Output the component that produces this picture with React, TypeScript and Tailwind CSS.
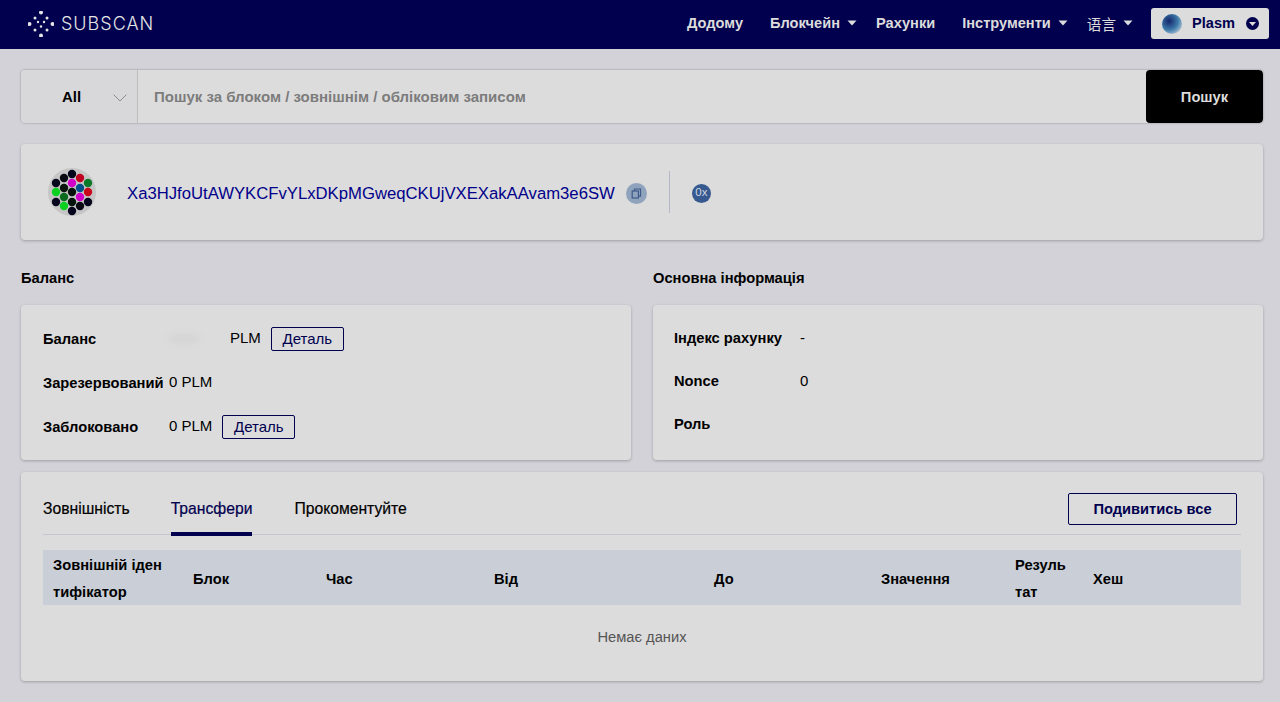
import { ChevronDown } from "lucide-react";

const navy = "text-[#00004f]";

function Caret() {
  return (
    <svg width="10" height="6" viewBox="0 0 10 6" className="ml-[7px]">
      <path d="M0.5 0.5h9L5 5.5z" fill="currentColor" />
    </svg>
  );
}

function NavItem({ label, caret, className }: { label: string; caret?: boolean; className?: string }) {
  return (
    <div className={`flex items-center text-[14.6px] font-bold text-[#dcdcdc] ${className ?? ""}`}>
      {label}
      {caret && <Caret />}
    </div>
  );
}

function Logo() {
  const dots = [
    [13, 1.5, 2], [7, 7, 1.5], [19, 7, 1.5], [1.5, 13, 2], [10, 11, 1.2], [16, 11, 1.2],
    [24.5, 13, 2], [7, 19, 1.5], [19, 19, 1.5], [13, 15.5, 1.2], [13, 24.5, 2],
  ];
  return (
    <div className="flex items-center">
      <svg width="26" height="26" viewBox="0 0 26 26">
        {dots.map(([x, y, r]) => (
          <circle key={`${x}-${y}`} cx={x} cy={y} r={r} fill="#e4e4e4" />
        ))}
      </svg>
      <span className="ml-[7px] font-['Inter',sans-serif] text-[18px] font-light tracking-[1px] text-[#e4e4e4]">
        SUBSCAN
      </span>
    </div>
  );
}

function Identicon() {
  const dots: [number, number, string][] = [
    [72, 174, "#04041c"],
    [64, 178, "#0a0a14"],
    [80, 178, "#c00020"],
    [56, 183, "#06061c"],
    [72, 183, "#d000c8"],
    [88, 183, "#0a7a2a"],
    [64, 188, "#08140c"],
    [80, 188, "#00508c"],
    [56, 192, "#0ad020"],
    [72, 192, "#08100c"],
    [88, 192, "#c80818"],
    [64, 197, "#0a6a1e"],
    [80, 197, "#d000c8"],
    [56, 202, "#06061c"],
    [72, 202, "#06140c"],
    [88, 202, "#04041c"],
    [64, 206, "#0ad020"],
    [80, 206, "#0a0a14"],
    [72, 211, "#04041c"],
  ];
  return (
    <svg width="48" height="48" viewBox="48 168 48 48" className="shrink-0">
      <circle cx="72" cy="192" r="24" fill="#c6c6c6" />
      {dots.map(([x, y, c]) => (
        <circle key={`${x}-${y}`} cx={x} cy={y} r="4.2" fill={c} />
      ))}
    </svg>
  );
}

function DetailButton() {
  return (
    <button className="flex h-[24px] w-[73px] items-center justify-center rounded-[2px] border border-[#00004f] text-[15px] text-[#00004f]">
      Деталь
    </button>
  );
}

function Row({
  label,
  children,
  labelWidth,
  height,
}: {
  label: string;
  children?: React.ReactNode;
  labelWidth: string;
  height: string;
}) {
  return (
    <div className={`flex ${height} items-center text-[15px] text-black`}>
      <div className={`${labelWidth} shrink-0 whitespace-nowrap text-[14.7px] font-bold`}>{label}</div>
      {children}
    </div>
  );
}

const columns = [
  "Зовнішній ідентифікатор",
  "Блок",
  "Час",
  "Від",
  "До",
  "Значення",
  "Результат",
  "Хеш",
];

export default function App() {
  return (
    <div className="min-h-[702px] bg-[#d2d2d8] font-['Liberation_Sans',sans-serif]">
      <header className="flex h-[49px] items-center bg-[#00004f] pb-[2px] pl-[28px] pr-[11px]">
        <Logo />
        <nav className="ml-auto flex items-center">
          <NavItem label="Додому" />
          <NavItem label="Блокчейн" caret className="ml-[27px]" />
          <NavItem label="Рахунки" className="ml-[19px]" />
          <NavItem label="Інструменти" caret className="ml-[27px]" />
          <div className="ml-[19px] flex items-center font-['Noto_Sans_CJK_SC',sans-serif] text-[14.6px] text-[#dcdcdc]">
            语言
            <Caret />
          </div>
          <div className="ml-[18px] flex h-[31px] w-[118px] items-center rounded-[3px] bg-[#dcdcdc] pl-[11px] pr-[10px]">
            <svg width="20" height="20" viewBox="0 0 20 20">
              <defs>
                <radialGradient id="plasm" cx="0.35" cy="0.35" r="0.8">
                  <stop offset="0" stopColor="#15256b" />
                  <stop offset="0.55" stopColor="#3b78a8" />
                  <stop offset="1" stopColor="#c8d4dc" />
                </radialGradient>
              </defs>
              <circle cx="10" cy="10" r="10" fill="url(#plasm)" />
            </svg>
            <span className={`ml-[10px] text-[14.6px] font-bold ${navy}`}>Plasm</span>
            <svg width="13" height="13" viewBox="0 0 13 13" className="ml-auto">
              <circle cx="6.5" cy="6.5" r="6.5" fill="#00004f" />
              <path d="M3 5h7L6.5 9z" fill="#dcdcdc" />
            </svg>
          </div>
        </nav>
      </header>

      <main className="pl-[21px] pr-[17px] pt-[21px]">
        <div className="flex h-[53px] overflow-hidden rounded-[4px] bg-[#dcdcdc] shadow-[0_0_2px_rgba(0,0,0,0.4)]">
          <div className="flex w-[117px] items-center border-r border-[#bdbdc0] bg-[#d8d8da] pl-[41px] pt-[2px] text-[15px] font-bold text-black">
            All
            <ChevronDown size={24} strokeWidth={1} className="ml-[27px] text-[#8c8c8c]" />
          </div>
          <div className="flex flex-1 items-center pl-[16px] pt-[2px] text-[15px] font-bold text-[#7c7c7c]">
            Пошук за блоком / зовнішнім / обліковим записом
          </div>
          <button className="w-[117px] rounded-[4px] bg-black pt-[2px] text-[14.7px] font-bold text-[#dcdcdc]">Пошук</button>
        </div>

        <div className="mt-[21px] flex h-[96px] items-center rounded-[4px] bg-[#dcdcdc] pl-[27px] shadow-[0_1px_3px_rgba(0,0,0,0.25)]">
          <Identicon />
          <span className="ml-[31px] mt-[3px] text-[16.7px] text-[#00008a]">Xa3HJfoUtAWYKCFvYLxDKpMGweqCKUjVXEXakAAvam3e6SW</span>
          <div className="ml-[11px] mt-[2px] flex h-[21px] w-[21px] items-center justify-center rounded-full bg-[#8fa3bd]">
            <svg width="11" height="11" viewBox="0 0 11 11" fill="none" stroke="#3e5a88" strokeWidth="1.2">
              <rect x="1.2" y="3" width="6.2" height="7" fill="#8fa3bd" />
              <path d="M3.5 3V1h6v7.2H7.4" />
            </svg>
          </div>
          <div className="ml-[22px] h-[42px] w-px bg-[#b4b7c6]" />
          <div className="ml-[22px] mt-[2px] flex h-[19px] w-[19px] items-center justify-center rounded-full bg-[#36598f] text-[11.5px] text-[#d0d6e0]">
            0x
          </div>
        </div>

        <div className="mt-[30px] grid grid-cols-2 gap-x-[22px]">
          <section>
            <h2 className="h-[35px] text-[14.7px] font-bold leading-[17px] text-black">Баланс</h2>
            <div className="h-[155px] rounded-[4px] bg-[#dcdcdc] px-[22px] pt-[12px] shadow-[0_1px_3px_rgba(0,0,0,0.25)]">
              <Row label="Баланс" labelWidth="w-[126px]" height="h-[44px]">
                <span className="h-[8px] w-[30px] rounded-full bg-[#d4d4d4] blur-[3px]" />
                <span className="ml-[31px] -translate-y-px">PLM</span>
                <div className="ml-[10px]">
                  <DetailButton />
                </div>
              </Row>
              <Row label="Зарезервований" labelWidth="w-[126px]" height="h-[44px]">
                <span className="-translate-y-px">0 PLM</span>
              </Row>
              <Row label="Заблоковано" labelWidth="w-[126px]" height="h-[44px]">
                <span className="-translate-y-px">0 PLM</span>
                <div className="ml-[10px]">
                  <DetailButton />
                </div>
              </Row>
            </div>
          </section>
          <section>
            <h2 className="h-[35px] text-[14.7px] font-bold leading-[17px] text-black">Основна інформація</h2>
            <div className="h-[155px] rounded-[4px] bg-[#dcdcdc] px-[21px] pt-[12px] shadow-[0_1px_3px_rgba(0,0,0,0.25)]">
              <Row label="Індекс рахунку" labelWidth="w-[126px]" height="h-[43px]">
                <span>-</span>
              </Row>
              <Row label="Nonce" labelWidth="w-[126px]" height="h-[43px]">
                <span>0</span>
              </Row>
              <Row label="Роль" labelWidth="w-[126px]" height="h-[43px]" />
            </div>
          </section>
        </div>

        <div className="mt-[12px] h-[209px] rounded-[4px] bg-[#dcdcdc] px-[22px] pt-[21px] shadow-[0_1px_3px_rgba(0,0,0,0.25)]">
          <div className="flex h-[42px] items-start border-b border-[#c4c6cf]">
            <div className="flex h-[42px] items-center pb-[10px] text-[15.7px] text-black [-webkit-text-stroke:0.2px]">Зовнішність</div>
            <div className={`ml-[41px] -mb-px flex h-[43px] items-center border-b-[4px] border-[#00004f] pb-[7px] text-[15.7px] ${navy} [-webkit-text-stroke:0.2px]`}>
              Трансфери
            </div>
            <div className="ml-[42px] flex h-[42px] items-center pb-[10px] text-[15.7px] text-black [-webkit-text-stroke:0.2px]">Прокоментуйте</div>
            <button className={`ml-auto mr-[4px] h-[32px] w-[169px] rounded-[2px] border border-[#00004f] text-[14.7px] font-bold ${navy}`}>
              Подивитись все
            </button>
          </div>

          <div className="mt-[15px] grid h-[55px] grid-cols-[140px_133px_168px_220px_167px_134px_78px_158px] items-center bg-[#c9ced7] pt-[2px] text-[14.7px] font-bold leading-[27px] text-black">
            {columns.map((label) => (
              <div key={label} className="break-all pl-[10px] pr-[14px]">
                {label}
              </div>
            ))}
          </div>
          <div className="pt-[21px] text-center text-[14.7px] text-[#555]">Немає даних</div>
        </div>
      </main>
    </div>
  );
}
